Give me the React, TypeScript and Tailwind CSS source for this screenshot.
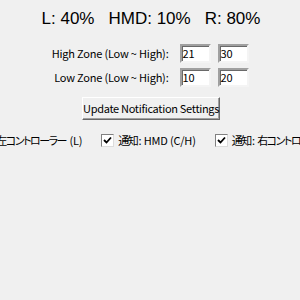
import React from "react";

const font = { fontFamily: '"Liberation Sans", "Noto Sans CJK JP", sans-serif' };
const small = { fontFamily: '"Noto Sans CJK JP", "Liberation Sans", sans-serif', fontFeatureSettings: '"palt"' };

function Entry({ value }: { value: string }) {
  return (
    <div className="w-[31px] h-[19px] bg-white border-2 border-t-[#a0a0a0] border-l-[#a0a0a0] border-b-[#f4f4f4] border-r-[#f4f4f4] shadow-[inset_1px_1px_0_#696969] flex items-center pl-[1px] text-[11px] text-black leading-none">
      {value}
    </div>
  );
}

function Tight({ s }: { s: string }) {
  return (
    <>
      <span className="tracking-[-1.5px]">{s.slice(0, -1)}</span>
      {s.slice(-1)}
    </>
  );
}

function Check({ jp, rest }: { jp?: string; rest: string }) {
  return (
    <div className="flex items-center gap-[4px] shrink-0">
      <div className="w-[13px] h-[13px] bg-white border border-t-[#808080] border-l-[#808080] border-b-[#dcdcdc] border-r-[#dcdcdc] flex items-center justify-center">
        <svg width="9" height="9" viewBox="0 0 9 9">
          <path d="M1 4 L3.5 6.5 L8 1.5" stroke="#000" strokeWidth="1.8" fill="none" />
        </svg>
      </div>
      <span className="text-[11px] text-black whitespace-nowrap leading-none tracking-[-0.2px]">
        <Tight s="通知" />:{" "}
        {jp && <Tight s={jp} />}
        {rest}
      </span>
    </div>
  );
}

export default function App() {
  return (
    <div className="w-[300px] h-[300px] bg-[#f0f0f0] overflow-hidden text-black" style={font}>
      <div className="flex justify-center pt-[9px] h-[40px] text-[17px] leading-[20px] gap-[14px] pl-[2px]">
        <span>L: 40%</span>
        <span>HMD: 10%</span>
        <span>R: 80%</span>
      </div>
      <div className="flex flex-col gap-[5px] pr-[3px] mt-[4px]" style={small}>
        <div className="flex justify-center items-center">
          <span className="w-[120px] text-right text-[11px] whitespace-nowrap leading-none tracking-[-0.2px]">High Zone (Low ~ High):</span>
          <div className="ml-[11px]"><Entry value="21" /></div>
          <div className="ml-[7px]"><Entry value="30" /></div>
        </div>
        <div className="flex justify-center items-center">
          <span className="w-[120px] text-right text-[11px] whitespace-nowrap leading-none tracking-[-0.2px]">Low Zone (Low ~ High):</span>
          <div className="ml-[11px]"><Entry value="10" /></div>
          <div className="ml-[7px]"><Entry value="20" /></div>
        </div>
      </div>
      <div className="flex justify-center mt-[10px] pl-[2px]" style={small}>
        <button className="w-[138px] h-[23px] bg-[#f0f0f0] border border-t-white border-l-white border-b-[#696969] border-r-[#696969] text-[11px] text-black shadow-[inset_-1px_-1px_0_#a0a0a0] leading-none whitespace-nowrap tracking-[-0.3px]">
          Update Notification Settings
        </button>
      </div>
      <div className="flex justify-center gap-[19px] mt-[14px] pr-[2px]" style={small}>
        <Check jp="左コントローラー" rest=" (L)" />
        <Check rest="HMD (C/H)" />
        <Check jp="右コントローラー" rest=" (R)" />
      </div>
    </div>
  );
}
